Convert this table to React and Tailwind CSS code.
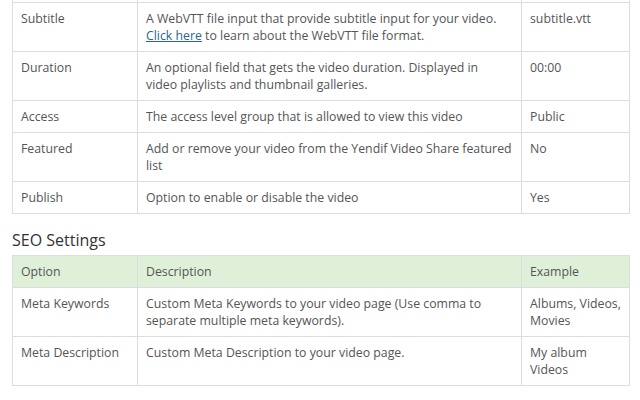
import React from "react";

const general = [
  {
    option: "Subtitle",
    desc: (
      <>
        A WebVTT file input that provide subtitle input for your video.{" "}
        <a href="#" className="text-[#2a6496] underline">Click here</a> to learn about the WebVTT file format.
      </>
    ),
    example: "subtitle.vtt",
  },
  {
    option: "Duration",
    desc: (
      <>
        An optional field that gets the video duration. Displayed in
        <br />
        video playlists and thumbnail galleries.
      </>
    ),
    example: "00:00",
  },
  { option: "Access", desc: "The access level group that is allowed to view this video", example: "Public" },
  {
    option: "Featured",
    desc: "Add or remove your video from the Yendif Video Share featured list",
    example: "No",
  },
  { option: "Publish", desc: "Option to enable or disable the video", example: "Yes" },
];

const seo = [
  {
    option: "Meta Keywords",
    desc: "Custom Meta Keywords to your video page (Use comma to separate multiple meta keywords).",
    example: "Albums, Videos, Movies",
  },
  { option: "Meta Description", desc: "Custom Meta Description to your video page.", example: "My album Videos" },
];

const cell = "border border-[#dddddd] px-2 py-[7px] align-top";

const OptionsTable = ({ rows, head, cutTop }) => (
  <table className="w-[617px] table-fixed border-collapse text-[12.3px] leading-[17px] text-[#555555]">
    <colgroup>
      <col className="w-[125px]" />
      <col className="w-[384px]" />
      <col className="w-[108px]" />
    </colgroup>
    {head && (
      <thead>
        <tr className="bg-[#dff0d8]">
          <th className={`${cell} text-left font-normal`}>Option</th>
          <th className={`${cell} text-left font-normal`}>Description</th>
          <th className={`${cell} text-left font-normal`}>Example</th>
        </tr>
      </thead>
    )}
    <tbody>
      {cutTop && (
        <tr className="h-[20px]">
          <td className="border border-[#dddddd]"></td>
          <td className="border border-[#dddddd]"></td>
          <td className="border border-[#dddddd]"></td>
        </tr>
      )}
      {rows.map((r, i) => (
        <tr key={i}>
          <td className={cell}>{r.option}</td>
          <td className={cell}>{r.desc}</td>
          <td className={cell}>{r.example}</td>
        </tr>
      ))}
    </tbody>
  </table>
);

const App = () => {
  return (
    <div className="h-[400px] w-[640px] overflow-hidden bg-white pl-3" style={{ fontFamily: '"Open Sans", sans-serif' }}>
      <div className="-mt-[18px]">
        <OptionsTable rows={general} cutTop />
      </div>
      <h3 className="mt-[15px] mb-[4px] text-[16px] leading-[22px] font-normal text-[#333333]">SEO Settings</h3>
      <OptionsTable rows={seo} head />
    </div>
  );
};

export default App;
